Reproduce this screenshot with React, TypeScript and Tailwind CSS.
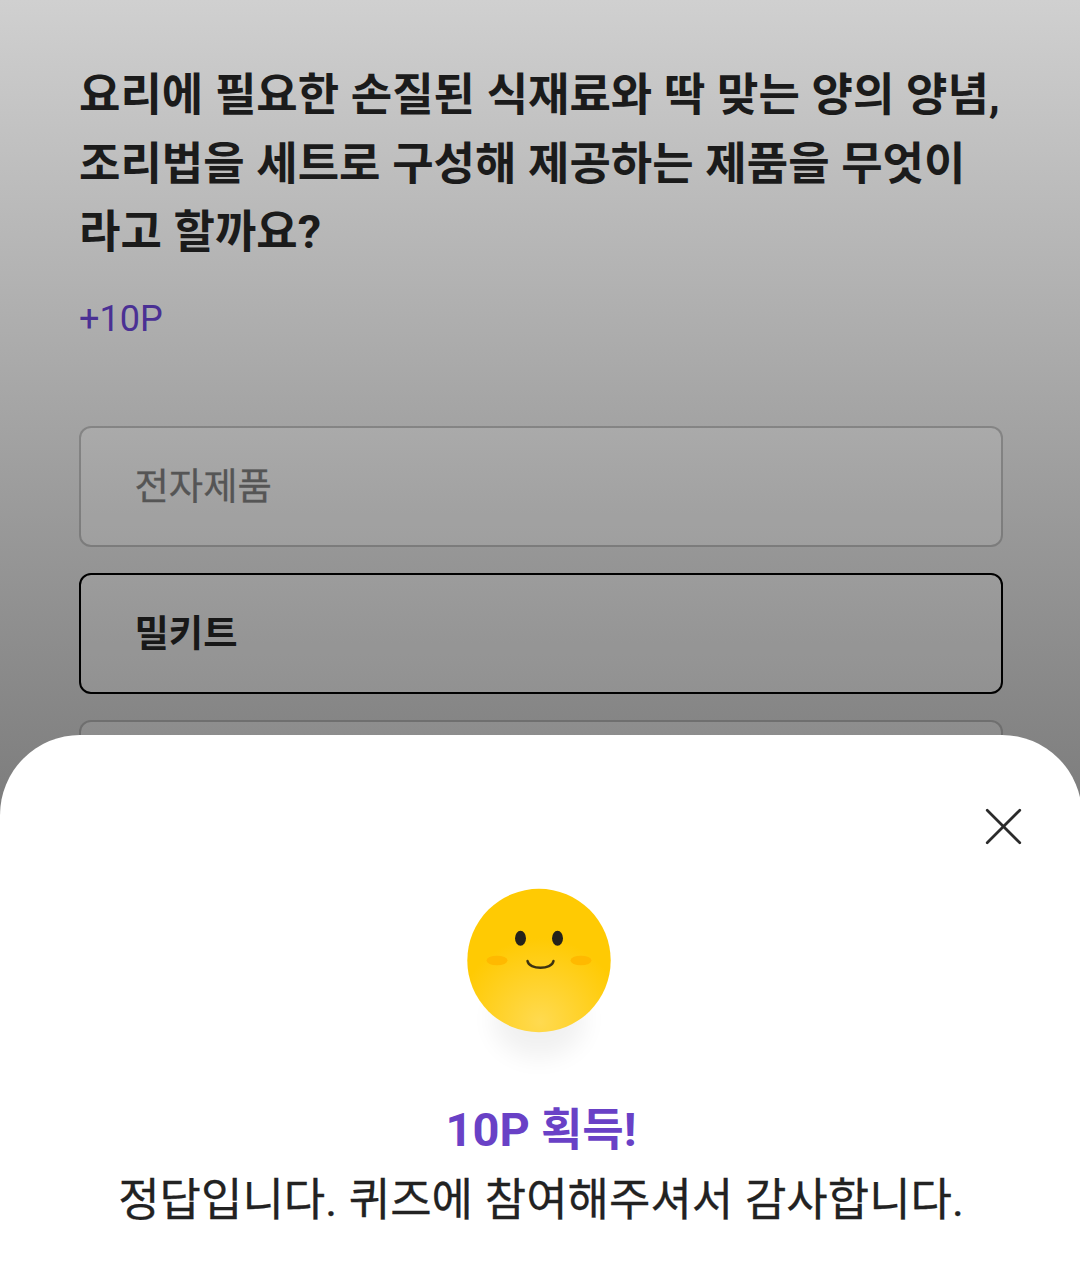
const font = "font-['Roboto','Noto_Sans_CJK_KR',sans-serif]";

const options = [
  { label: '전자제품', selected: false },
  { label: '밀키트', selected: true },
  { label: '', selected: false },
];

function Option({ label, selected }: { label: string; selected: boolean }) {
  return (
    <div
      className={
        'flex h-[121px] items-center rounded-xl border-2 bg-white/8 px-[53.500px] pt-[3px] text-[37.300px] leading-none ' +
        (selected
          ? 'border-black font-bold text-[#181818]'
          : 'border-black/22 text-[#555] [-webkit-text-stroke:0.3px_#555]')
      }
    >
      {label}
    </div>
  );
}

function Smiley() {
  return (
    <svg width="180" height="200" viewBox="450 880 180 200" fill="none">
      <defs>
        <radialGradient id="glow" gradientUnits="userSpaceOnUse" cx="540" cy="1022" r="84">
          <stop offset="0" stopColor="#ffda50" />
          <stop offset="1" stopColor="#ffca03" />
        </radialGradient>
        <filter id="soft" x="-50%" y="-50%" width="200%" height="200%">
          <feGaussianBlur stdDeviation="12" />
        </filter>
      </defs>
      <ellipse cx="539" cy="1020" rx="46" ry="38" fill="#000" opacity=".055" filter="url(#soft)" />
      <circle cx="539" cy="960.500" r="71.700" fill="url(#glow)" />
      <ellipse cx="497" cy="960.500" rx="10.500" ry="4.800" fill="#ffb900" />
      <ellipse cx="581" cy="960.500" rx="10.500" ry="4.800" fill="#ffb900" />
      <ellipse cx="520.500" cy="938.300" rx="5.500" ry="7.500" fill="#25221a" />
      <ellipse cx="557.500" cy="938.300" rx="5.500" ry="7.500" fill="#25221a" />
      <path d="M527.500 961C529 970 552 970 553.500 961" stroke="#3d3210" strokeWidth="2.400" strokeLinecap="round" />
    </svg>
  );
}

export default function App() {
  return (
    <div className={`relative h-[1273px] w-[1080px] overflow-hidden bg-white ${font}`}>
      <main className="h-[815px] bg-linear-to-b from-[#d0d0d0] to-[#7c7c7c] pt-[62px] pr-[77px] pl-[79px]">
        <h1 className="text-[45px] leading-[68.500px] font-bold [word-spacing:0.5px] whitespace-nowrap text-[#1b1b1b]">
          요리에 필요한 손질된 식재료와 딱 맞는 양의 양념,
          <br />
          조리법을 세트로 구성해 제공하는 제품을 무엇이
          <br />
          라고 할까요<span className="text-[47px] leading-none">?</span>
        </h1>
        <p className="mt-[29px] text-[36px] leading-[44px] text-[#4a3094]">+10P</p>
        <div className="mt-[85px] flex flex-col gap-[26px]">
          {options.map((o, i) => (
            <Option key={i} {...o} />
          ))}
        </div>
      </main>
      <section className="absolute top-[735px] -right-[2px] left-0 flex h-[538px] flex-col items-center rounded-t-[80px] bg-white">
        <button aria-label="닫기" className="absolute top-[73px] right-[60px]">
          <svg width="37" height="37" viewBox="0 0 37 37" stroke="#2b2b2b" strokeWidth="2.700" strokeLinecap="round">
            <path d="M2.200 2.200L34.800 34.800M34.800 2.200L2.200 34.800" />
          </svg>
        </button>
        <div className="mt-[145px] mr-[2px]">
          <Smiley />
        </div>
        <h2 className="mt-[17px] h-[68px] text-[45px] leading-[68px] font-bold text-[#6941c6]">
          <span className="text-[47px] leading-none">10P</span> 획득<span className="text-[47px] leading-none">!</span>
        </h2>
        <p className="mt-[2px] text-[45px] leading-[68px] [word-spacing:0.6px] whitespace-nowrap text-[#222] [-webkit-text-stroke:0.3px_#222]">
          정답입니다. 퀴즈에 참여해주셔서 감사합니다.
        </p>
      </section>
    </div>
  );
}
